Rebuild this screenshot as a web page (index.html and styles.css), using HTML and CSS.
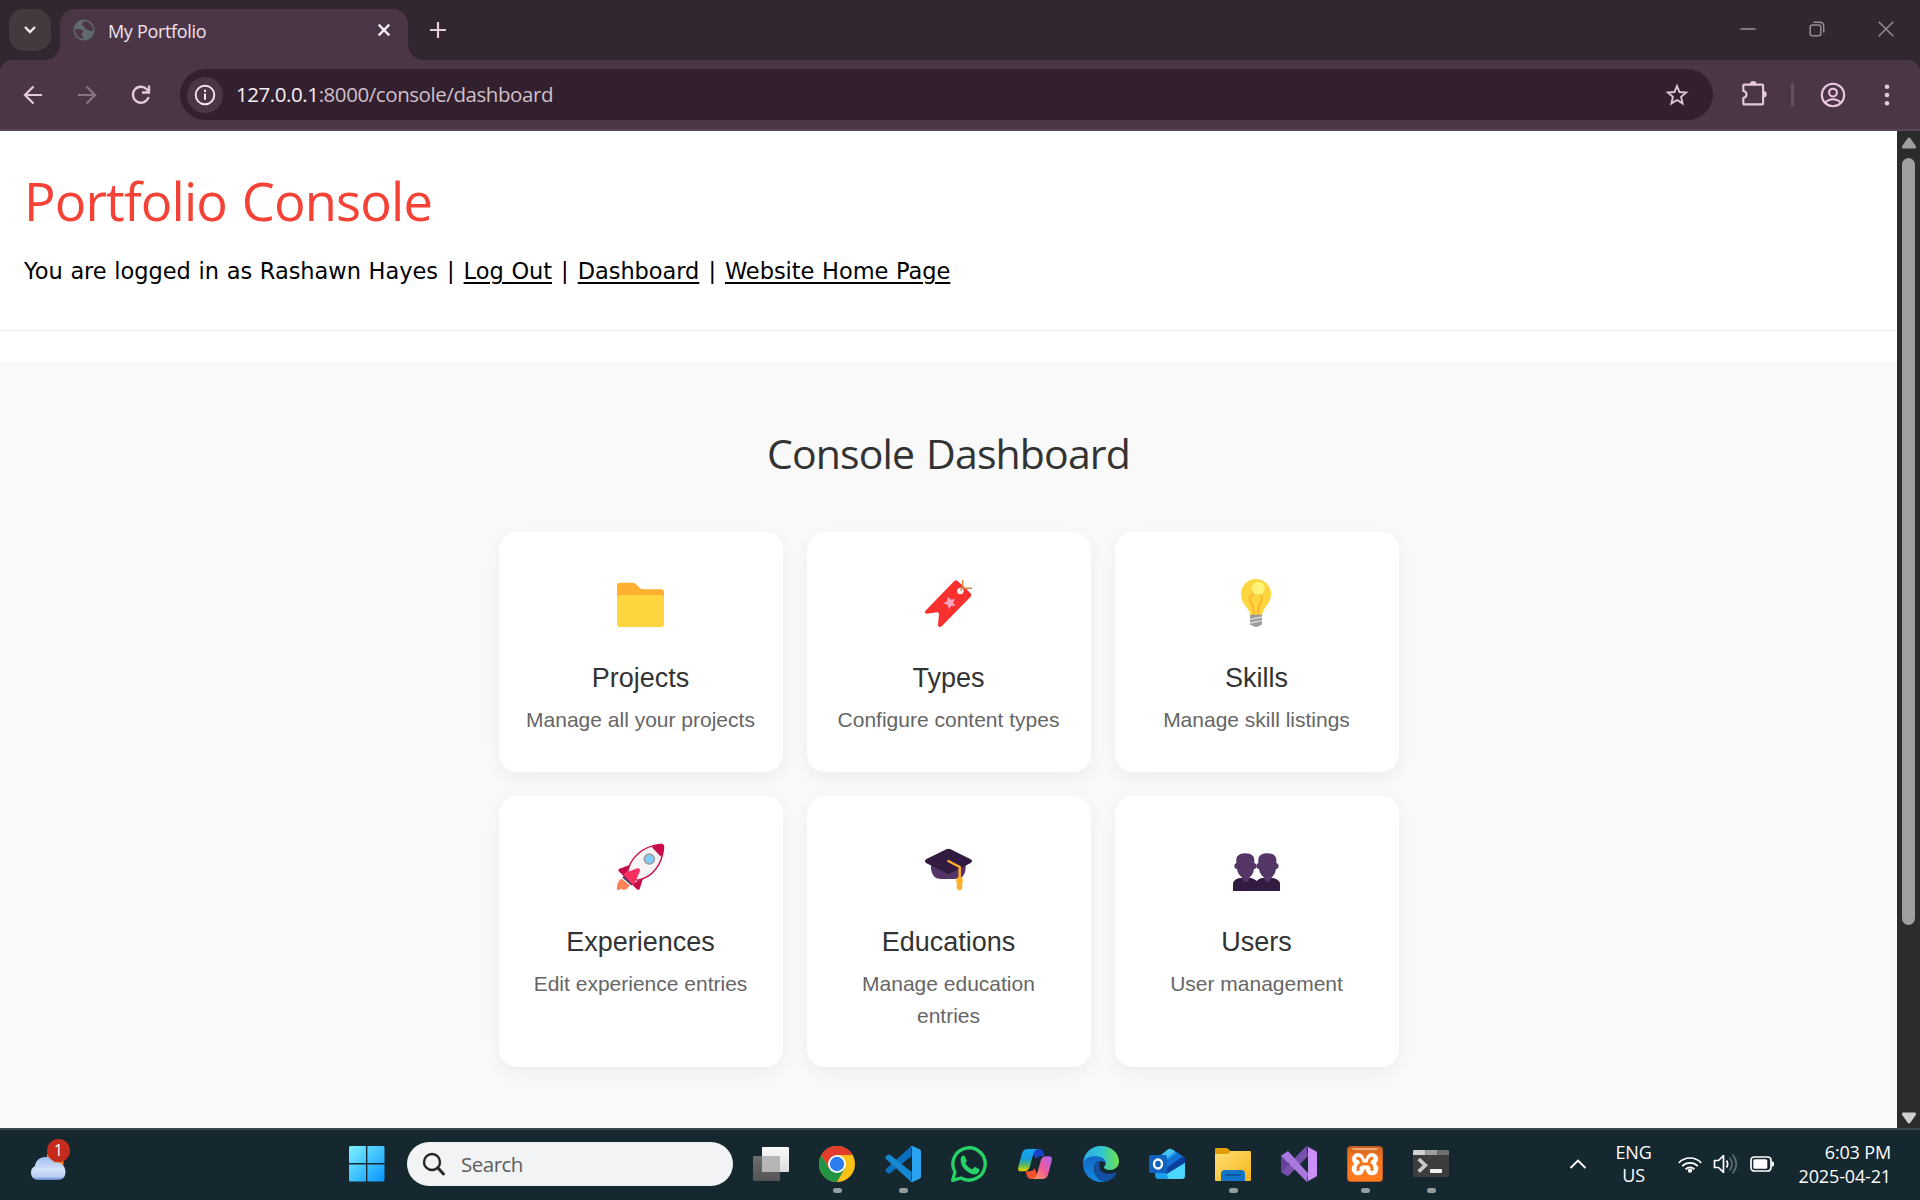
FILE: index.html
```
<!DOCTYPE html>
<html lang="en">
<head>
<meta charset="utf-8">
<title>My Portfolio</title>
<link rel="stylesheet" href="styles.css">
</head>
<body>
<div class="screen">
  <div class="tabstrip">
    <div class="tab-search"><svg width="14" height="10" viewBox="0 0 14 10"><path d="M2 2l5 5 5-5" fill="none" stroke="#f3e6ef" stroke-width="2.4"/></svg></div>
    <div class="tab">
      <svg class="favicon" width="22" height="22" viewBox="0 0 22 22"><circle cx="11" cy="11" r="10.5" fill="#5f6a6f"/><path d="M11.5 2c-1 1.500-2.500 1.500-2.500 3.500 0 2 3 1.500 3 4 0 1.500 2 1 3.500 1.500 1.500.6 2 1.500 4 1l.5-1A9 9 0 0 0 11.500 2zM2 10c3 0 5.500.2 7 1 1.500.8 1.500 2.200 0 3-1.200.7-1 2.500.5 3l1 2.800C5 19.500 2 15 2 10z" fill="#4b3647"/></svg>
      <span class="tab-title">My Portfolio</span>
      <svg class="tab-close" width="14" height="14" viewBox="0 0 14 14"><path d="M1.700 1.700l10.600 10.600M12.300 1.700L1.700 12.300" stroke="#f6eaf3" stroke-width="2.400"/></svg>
    </div>
    <svg class="new-tab" width="18" height="18" viewBox="0 0 18 18"><path d="M9 1v16M1 9h16" stroke="#e3cadc" stroke-width="2.200"/></svg>
    <div class="window-buttons">
      <svg width="16" height="16" viewBox="0 0 16 16"><path d="M.5 8h15" stroke="#968c93" stroke-width="1.600"/></svg>
      <svg width="16" height="16" viewBox="0 0 16 16" fill="none" stroke="#968c93" stroke-width="1.500"><rect x="1.200" y="4" width="10.600" height="10.800" rx="2.200"/><path d="M4.500 1.300H11a3.700 3.700 0 0 1 3.700 3.700v6.500"/></svg>
      <svg width="16" height="16" viewBox="0 0 16 16"><path d="M.7.700l14.600 14.600M15.300.700L.7 15.300" stroke="#968c93" stroke-width="1.500"/></svg>
    </div>
  </div>

  <div class="toolbar">
    <div class="nav-buttons">
      <svg width="20" height="20" viewBox="0 0 20 20" fill="none" stroke="#e3cadc" stroke-width="2.200"><path d="M19 10H2.500M10.500 1.500L2 10l8.500 8.500"/></svg>
      <svg width="20" height="20" viewBox="0 0 20 20" fill="none" stroke="#89747f" stroke-width="2.200"><path d="M1 10h16.500M9.500 1.500L18 10l-8.500 8.500"/></svg>
      <svg width="20" height="20" viewBox="0 0 20 20" fill="none" stroke="#e3cadc" stroke-width="2.300"><path d="M17.600 12A8 8 0 1 1 15.800 4.300L18 6.500"/><path d="M18 .5v7h-7"/></svg>
    </div>
    <div class="omnibox">
      <span class="site-info"><svg width="22" height="22" viewBox="0 0 22 22"><circle cx="11" cy="11" r="9.300" fill="none" stroke="#f3e6ef" stroke-width="1.900"/><path d="M11 9.600v6.200M11 5.800v2.100" stroke="#f3e6ef" stroke-width="2"/></svg></span>
      <span class="url"><b>127.0.0.1</b>:8000/console/dashboard</span>
      <svg class="star" width="24" height="24" viewBox="0 0 24 24"><path d="M12 3l2.500 6 6.600.6-5 4.300 1.500 6.500L12 17l-5.600 3.400 1.500-6.500-5-4.300 6.600-.6z" fill="none" stroke="#d8c9d4" stroke-width="1.900"/></svg>
    </div>
    <svg class="puzzle" width="26" height="26" viewBox="0 0 26 26"><path d="M3.200 4.600h18a.9.900 0 0 1 .9.900v18a.9.900 0 0 1-.9.900H3.200a.9.900 0 0 1-.9-.9V18c2.200-.6 3.200-2 3.200-3.600S4.500 11.400 2.300 10.800V5.500a.9.900 0 0 1 .9-.9z" fill="none" stroke="#e3cadc" stroke-width="2.100"/><path d="M9 4.200a3.200 3.200 0 0 1 6.400 0zM22.500 11a3.200 3.200 0 0 1 0 6.400z" fill="#e3cadc"/></svg>
    <span class="divider"></span>
    <svg class="avatar" width="26" height="26" viewBox="0 0 26 26" fill="none" stroke="#ecc8e2" stroke-width="2.100"><circle cx="13" cy="13" r="11.200"/><circle cx="13" cy="10.600" r="3.900"/><path d="M5.200 20.800c2-2.300 4.700-3.500 7.800-3.500s5.800 1.200 7.800 3.500"/></svg>
    <svg class="menu" width="6" height="24" viewBox="0 0 6 24" fill="#e3cadc"><circle cx="3" cy="3.700" r="2.300"/><circle cx="3" cy="12" r="2.300"/><circle cx="3" cy="20.300" r="2.300"/></svg>
  </div>

  <div class="viewport">
    <main class="page">
      <header class="console-header">
        <h1>Portfolio Console</h1>
        <p>You are logged in as Rashawn Hayes <i>|</i> <a href="#">Log Out</a> <i>|</i> <a href="#">Dashboard</a> <i>|</i> <a href="#">Website Home Page</a></p>
      </header>
      <section class="dashboard">
        <h2>Console Dashboard</h2>
        <div class="cards">
          <div class="card">
            <svg viewBox="0 0 144 144"><path d="M0 20Q0 11 9 11H46Q53 11 59 17L68 26Q72 31 79 31H133Q141 31 141 40V80H0z" fill="#ffb02e"/><rect y="48" width="141" height="96" rx="9" fill="#fcd53f"/></svg>
            <h3>Projects</h3><p>Manage all your projects</p>
          </div>
          <div class="card">
            <svg viewBox="0 0 144 144"><path fill-rule="evenodd" d="M88 6Q93 2 98 6L137 43Q141 48 137 53L50 142Q45 146 40 142Q38 140 39 136L42 106Q42 100 36 100L6 104Q-1 104 0 97zM106 26a10 10 0 1 0 .1 0z" fill="#f8312f"/><path d="M69 53L78 62L90 60L84 71L91 81L79 80L72 90L68 78L55 73L66 67z" fill="#f9a7c0"/><path d="M113 3V23L107 35M113 28H141" fill="none" stroke="#d3883e" stroke-width="4.500"/></svg>
            <h3>Types</h3><p>Configure content types</p>
          </div>
          <div class="card">
            <svg viewBox="0 0 144 144"><path d="M24 45a45 45 0 0 1 90 0c0 19-9 30-18 42-6 8-8 14-9 22H52c-1-8-4-15-10-22C33 75 24 64 24 45z" fill="#fcd53f"/><path d="M62 109L61 90C61 77 50 72 50 60A18 17 0 0 1 87 60C87 72 76 77 76 90L75 109" fill="none" stroke="#ffb02e" stroke-width="5"/><circle cx="76" cy="28" r="19.500" fill="#fff478"/><path d="M51 107H87V134Q87 138 82 139L75 143H64L56 139Q51 138 51 134z" fill="#9b9b9b"/><path d="M51 121L87 114M51 132L87 125" stroke="#d8d8d8" stroke-width="4"/></svg>
            <h3>Skills</h3><p>Manage skill listings</p>
          </div>
          <div class="card">
            <svg viewBox="0 0 144 144"><path d="M14 107C3 113-1 124 0 141Q8 142 11 138Q16 136 18 141Q31 141 38 127z" fill="#ff8257"/><path d="M38 66L7 77Q2 80 5 85L24 103zM78 106L68 139Q64 143 58 137L44 124z" fill="#ca0b4a"/><path d="M32 90C36 48 76 8 131 4Q140 4 140 14C136 62 108 104 60 112z" fill="#f4f4f4" stroke="#ca0b4a" stroke-width="4"/><path d="M104 12Q120 3 132 2Q143 2 141 16Q139 28 132 41z" fill="#ca0b4a"/><path d="M19 100L46 124" stroke="#533566" stroke-width="9"/><path d="M22 91L61 76Q70 75 69 84L52 122Q48 126 42 120L22 99Q18 95 22 91z" fill="#f92f60"/><circle cx="97" cy="48" r="15" fill="#83cbff" stroke="#9b9b9b" stroke-width="5"/></svg>
            <h3>Experiences</h3><p>Edit experience entries</p>
          </div>
          <div class="card">
            <svg viewBox="0 0 144 144"><path d="M18 60H122V78Q120 108 88 108H50Q21 108 18 78z" fill="#533566"/><path d="M64 19Q70 15 77 19L137 49Q145 54 137 60L78 90Q70 94 63 90L3 60Q-3 54 3 49z" fill="#321b41"/><path d="M70 54L104 72V106" fill="none" stroke="#ffb02e" stroke-width="7.500" stroke-linecap="round"/><path d="M104 102a10 10 0 0 1 8 16v15a8 8 0 0 1-17 0v-15a10 10 0 0 1 9-16z" fill="#ffb02e"/></svg>
            <h3>Educations</h3><p>Manage education entries</p>
          </div>
          <div class="card">
            <svg viewBox="0 0 144 144"><path d="M0 144V124Q0 105 30 104H46Q62 105 71 114Q78 105 94 104H110Q141 105 141 124V144z" fill="#321b41"/><g id="head"><path d="M10 56C8 40 18 31 37 31S66 40 64 56V60Q71 62 71 69Q71 77 63 78Q61 94 49 104Q46 117 38 117T28 104Q14 94 12 78Q4 77 4 69Q4 62 10 60z" fill="#533566"/></g><use href="#head" x="66"/></svg>
            <h3>Users</h3><p>User management</p>
          </div>
        </div>
      </section>
    </main>
    <div class="scrollbar">
      <svg width="16" height="12" viewBox="0 0 16 12"><path d="M6.500 1.500Q8-.3 9.500 1.500L14.800 9Q15.600 11.500 13.500 11.500H2.500Q.4 11.500 1.200 9z" fill="#9f9f9f"/></svg>
      <div class="thumb"></div>
      <svg width="16" height="12" viewBox="0 0 16 12"><path d="M6.500 10.500Q8 12.300 9.500 10.500L14.800 3Q15.600.5 13.500.5H2.500Q.4.500 1.200 3z" fill="#cfcfcf"/></svg>
    </div>
  </div>

  <div class="taskbar">
    <div class="weather">
      <svg width="38" height="36" viewBox="0 0 38 36"><defs><linearGradient id="cl" x2="0" y2="1"><stop offset="0" stop-color="#9ebdf2"/><stop offset=".55" stop-color="#d3e1fa"/><stop offset=".85" stop-color="#b9cef3"/><stop offset="1" stop-color="#5d86c9"/></linearGradient></defs><path d="M18 8H34.500V19H18z" fill="#f5820c"/><path d="M8 34a7.500 7.500 0 0 1-2-14C6.500 14.500 11 11 16 11c4.500 0 7.500 2 9 5.500C32 15.500 36.500 20 36.500 26c0 5-3 8-7.500 8z" fill="url(#cl)"/></svg>
      <span class="badge">1</span>
    </div>
    <div class="pinned">
      <svg class="start" width="36" height="36" viewBox="0 0 36 36"><defs><linearGradient id="win" x2="1" y2="1"><stop offset="0" stop-color="#7df3ff"/><stop offset="1" stop-color="#0894ff"/></linearGradient></defs><path d="M1.500 0H17v17H0V1.500Q0 0 1.500 0zM18.400 0H34Q35.500 0 35.500 1.500V17H18.400zM0 18.500H17V35.500H1.500Q0 35.500 0 34zM18.400 18.500H35.500V34Q35.500 35.500 34 35.500H18.400z" fill="url(#win)"/></svg>
      <div class="search"><svg width="24" height="24" viewBox="0 0 24 24" fill="none" stroke="#26292b" stroke-width="2.400"><circle cx="10" cy="10" r="8"/><path d="M16 16l5.500 6" stroke-width="3" stroke-linecap="round"/></svg><span>Search</span></div>
      <div class="apps">
        <div class="app"><svg viewBox="0 0 108 108"><defs><linearGradient id="tv" x2="0" y2="1"><stop offset="0" stop-color="#fafafa"/><stop offset="1" stop-color="#dcdcdc"/></linearGradient><linearGradient id="tv2" x2="0" y2="1"><stop offset="0" stop-color="#6c6c6c"/><stop offset="1" stop-color="#545454"/></linearGradient></defs><rect y="30" width="81" height="75" rx="4" fill="url(#tv2)"/><rect x="27" y="3" width="81" height="75" rx="3" fill="url(#tv)"/><path d="M27 30H78q3 0 3 3V78H30q-3 0-3-3z" fill="#b5b5b5"/></svg></div>
        <div class="app running"><svg viewBox="0 0 108 108"><circle cx="54" cy="54" r="54" fill="#fbc116"/><path d="M7.200 27A54 54 0 0 0 54 108L77.400 67.500 54 54 30.600 67.500z" fill="#229342"/><path d="M7.200 27L30.600 67.500 54 54 54 27H100.800A54 54 0 0 0 7.200 27z" fill="#e33b2e"/><circle cx="54" cy="54" r="27" fill="#fff"/><circle cx="54" cy="54" r="21.500" fill="#2d7cf0"/></svg></div>
        <div class="app running"><svg viewBox="0 0 108 108"><path d="M78 1L3 69Q-1 73 3 77L9 82Q12 84 16 81L80 30z" fill="#0b6fbd"/><path d="M78 107L3 39Q-1 35 3 31L9 26Q12 24 16 27L80 78z" fill="#1787d0"/><path d="M76 1Q80-1 84 1L104 10Q108 12 108 17V91Q108 96 104 98L84 107Q80 109 76 106Q81 106 81 99V9Q81 3 76 1z" fill="#2aa4f1"/></svg></div>
        <div class="app"><svg viewBox="0 0 108 108"><path d="M5 103L12 78A48.500 48.500 0 1 1 30 96z" fill="none" stroke="#25d366" stroke-width="10" stroke-linejoin="round"/><path d="M34 29q4-2 7 1l6 13q1 3-4 8c5 10 12 16 21 19q6-8 9-7l12 7c2 4-2 12-8 14-11 5-29-5-39-18S26 35 34 29z" fill="#25d366"/></svg></div>
        <div class="app"><svg viewBox="0 0 108 108"><defs><linearGradient id="cp1" x2="0" y2="1"><stop offset="0" stop-color="#17a6f3"/><stop offset=".45" stop-color="#169ed8"/><stop offset=".75" stop-color="#62bd52"/><stop offset="1" stop-color="#f6d000"/></linearGradient><linearGradient id="cp2" x1="1" x2="0" y2="1"><stop offset="0" stop-color="#a963f4"/><stop offset=".5" stop-color="#ef5a9c"/><stop offset="1" stop-color="#ffa455"/></linearGradient></defs><path d="M34 9H67Q76 9 79 18L83 31H70Q60 31 57 40L48 22Q44 10 34 9z" fill="#1a43c9"/><path d="M75 99H42Q33 99 30 90L26 76H39Q49 76 52 66L60 84Q65 98 75 99z" fill="#f5522f"/><path d="M34 9H62Q52 12 49 23L38 64Q34 76 20 76H13Q0 76 4 62L15 22Q19 9 34 9z" fill="url(#cp1)"/><path d="M75 99H47Q57 96 60 85L71 44Q75 31 88 31H95Q108 31 104 46L93 86Q89 99 75 99z" fill="url(#cp2)"/></svg></div>
        <div class="app"><svg viewBox="0 0 108 108"><defs><linearGradient id="e1" x2="1"><stop offset="0" stop-color="#2fa9e5"/><stop offset=".5" stop-color="#2fc5d3"/><stop offset="1" stop-color="#70e24c"/></linearGradient><linearGradient id="e2" x2="0" y2="1"><stop offset="0" stop-color="#1367c7"/><stop offset="1" stop-color="#128be0"/></linearGradient></defs><path d="M0 50C3 18 28 0 54 0c32 0 54 22 54 46 0 18-14 26-27 26-12 0-18-4-18-8 0-3 5-5 5-12 0-10-12-20-28-20C22 32 4 40 0 54z" fill="url(#e1)"/><path d="M0 54C2 38 20 30 38 31c18 0 30 10 30 21-2-4-8-7-15-7-12 0-20 10-20 23 0 20 16 36 34 39-36 6-67-18-67-53z" fill="url(#e2)"/><path d="M53 45c-14 2-22 15-18 31 4 18 18 31 32 31 16-3 27-13 32-24 1-3-1-4-4-3-22 9-45 0-46-18-.5-8 2-14 4-17z" fill="#124fa5"/></svg></div>
        <div class="app"><svg viewBox="0 0 108 108"><path d="M19 40L58 10Q63 7 68 10L103 32Q108 36 108 42V60L40 92H19z" fill="#1b9de4"/><path d="M33 30L58 10Q63 7 68 10L78 16 52 38z" fill="#47c1f4"/><path d="M40 68L95 29 108 36V55L50 88z" fill="#0b3f9c"/><path d="M40 52L84 20 101 31 50 68z" fill="#1272d6"/><path d="M40 92L108 50V90Q108 99 99 99H40z" fill="#4bd7fb"/><path d="M19 82L50 80 60 99H28Q19 99 19 90z" fill="#1e9fea"/><rect y="27" width="54" height="54" rx="5" fill="#0f62bd"/><ellipse cx="27" cy="54" rx="12" ry="13.500" fill="none" stroke="#fff" stroke-width="7"/></svg></div>
        <div class="app running"><svg viewBox="0 0 108 108"><defs><linearGradient id="fe" x2="1" y2="1"><stop offset="0" stop-color="#ffe07a"/><stop offset="1" stop-color="#f6b414"/></linearGradient></defs><path d="M0 9q0-3 3-3H33q4 0 7 3l7 6H105V30H0z" fill="#e19d05"/><path d="M0 24H34Q39 24 43 20L47 15H105q3 0 3 3v84q0 3-3 3H3q-3 0-3-3z" fill="url(#fe)"/><path d="M18 105V83Q18 72 29 72H79Q90 72 90 83V105z" fill="#1374c8"/><path d="M34 87H76" stroke="#0a4c8d" stroke-width="5" stroke-linecap="round"/></svg></div>
        <div class="app"><svg viewBox="0 0 108 108"><path d="M0 29L21 17V91L0 79z" fill="#65409b"/><path d="M0 79L76 0 81 30 21 91z" fill="#7650aa"/><path d="M0 29L21 15 81 82 78 108z" fill="#a878df"/><path d="M76 0L105 16Q108 18 108 22V86Q108 90 105 92L76 108Q81 106 81 99V9Q81 3 76 0z" fill="#cb90f8"/></svg></div>
        <div class="app running"><svg viewBox="0 0 108 108"><defs><linearGradient id="xa" x2="0" y2="1"><stop offset="0" stop-color="#c95e1b"/><stop offset=".3" stop-color="#f67620"/><stop offset="1" stop-color="#ff7b1d"/></linearGradient></defs><rect x="1.500" y="1.500" width="105" height="105" rx="9" fill="url(#xa)" stroke="#bd5e25" stroke-width="3"/><path d="M12 6H96Q91 13 82 13H26Q17 13 12 6z" fill="#efa779"/><g fill="#fff"><circle cx="33" cy="39" r="18"/><circle cx="75" cy="39" r="18"/><circle cx="33" cy="69" r="19"/><circle cx="75" cy="69" r="19"/><path d="M30 38H78V70H30z"/></g><path d="M32 37Q38 37 41 44L44 54H66Q67 38 75 37M44 54Q32 58 33 71M66 54Q76 58 75 71" fill="none" stroke="#f5741e" stroke-width="9" stroke-linecap="round"/></svg></div>
        <div class="app running"><svg viewBox="0 0 108 108"><path d="M0 27H108V88q0 5-5 5H5q-5 0-5-5z" fill="#3d3d3d"/><path d="M0 27V16q0-4 4-4H37V27z" fill="#d2d2d2"/><path d="M37 12H73V27H37z" fill="#9e9e9e"/><path d="M73 12H104q4 0 4 4V27H73z" fill="#707070"/><path d="M17 39L37 58 17 77" fill="none" stroke="#c9c9c9" stroke-width="11"/><rect x="51" y="69" width="36" height="12" rx="2" fill="#f0f0f0"/></svg></div>
      </div>
    </div>
    <div class="tray">
      <svg class="chevron" width="18" height="12" viewBox="0 0 18 12"><path d="M1.500 10L9 2.500l7.500 7.500" fill="none" stroke="#fff" stroke-width="1.900"/></svg>
      <div class="lang">ENG<br>US</div>
      <div class="status">
        <svg width="24" height="18" viewBox="0 0 24 18" fill="none" stroke="#fff" stroke-width="1.700"><path d="M.8 7.800a15.500 15.500 0 0 1 22.400 0M4.200 11.200a11 11 0 0 1 15.600 0M7.500 14.300a6.400 6.400 0 0 1 9 0"/><circle cx="12" cy="15.600" r="2.200" fill="#fff" stroke="none"/></svg>
        <svg width="26" height="22" viewBox="0 0 26 22" fill="none" stroke="#fff" stroke-width="1.700"><path d="M1.500 7.500H5.500L10.500 2.700V19.300L5.500 14.500H1.500z" stroke-linejoin="round"/><path d="M13.500 7.500q2.300 3.500 0 7"/><path d="M16.500 4.500q5 6.500 0 13M19.500 1.500q7.500 9.500 0 19" stroke="#5d6b72"/></svg>
        <svg width="25" height="18" viewBox="0 0 25 18"><rect x="1" y="2" width="20" height="14" rx="3.300" fill="none" stroke="#fff" stroke-width="1.700"/><rect x="3.300" y="4.300" width="14" height="9.400" rx="1.500" fill="#fff"/><path d="M21.500 6.500h1q1.500 0 1.500 1.500v2q0 1.500-1.500 1.500h-1z" fill="#fff"/></svg>
      </div>
      <div class="clock">6:03 PM<br>2025-04-21</div>
    </div>
  </div>
</div>
</body>
</html>
```
FILE: styles.css
```
* { box-sizing: border-box; }
body { margin: 0; overflow: hidden; }
h1, h2, h3, p { margin: 0; font-weight: 400; }
svg { display: block; flex: none; }

.screen {
  width: 1920px;
  height: 1200px;
  display: flex;
  flex-direction: column;
  font-family: "Open Sans", "Noto Sans", sans-serif;
  background: #33272f;
}

/* Browser tab strip */
.tabstrip { height: 60px; flex: none; display: flex; align-items: flex-start; padding: 9px 12px 0 9px; }
.tab-search { width: 42px; height: 42px; border-radius: 15px; background: #43393f; display: flex; align-items: center; justify-content: center; }
.tab { position: relative; margin-left: 9px; width: 348px; height: 51px; padding: 0 17px 9px 13px; border-radius: 15px 15px 0 0; background: #4b3647; display: flex; align-items: center; }
.tab::before, .tab::after { content: ""; position: absolute; bottom: 0; width: 15px; height: 15px; }
.tab::before { left: -15px; background: radial-gradient(circle at 0 0, transparent 14.5px, #4b3647 15px); }
.tab::after { right: -15px; background: radial-gradient(circle at 100% 0, transparent 14.5px, #4b3647 15px); }
.tab-title { flex: 1; margin-left: 13px; padding-top: 1px; font-size: 18px; line-height: 24px; letter-spacing: -.32px; color: #f1e2ec; }
.new-tab { margin: 12px 0 0 21px; }
.window-buttons { margin: 12px 14px 0 auto; display: flex; gap: 53px; }

/* Browser toolbar */
.toolbar { height: 71px; flex: none; padding: 9px 30px 9px 23px; border-radius: 12px 12px 0 0; border-bottom: 2px solid #5a4656; background: #4b3647; display: flex; align-items: center; }
.nav-buttons { display: flex; gap: 34px; }
.omnibox { width: 1534px; height: 51px; margin-left: 29px; padding: 0 24px 0 7px; border-radius: 26px; background: #33202e; display: flex; align-items: center; }
.site-info { width: 36px; height: 36px; border-radius: 50%; background: #4b3647; display: flex; align-items: center; justify-content: center; }
.url { flex: 1; margin: 0 0 2px 13px; font-size: 20.5px; letter-spacing: -.43px; color: #cfbfca; }
.url b { font-weight: 400; color: #f8ecf5; }
.puzzle { margin-left: 28px; margin-bottom: 3px; }
.divider { width: 3px; height: 24px; margin-left: 24px; border-radius: 2px; background: #66505f; }
.avatar { margin-left: 26px; }
.menu { margin-left: 38px; }

/* Page area */
.viewport { height: 997px; flex: none; display: flex; overflow: hidden; }
.page { flex: 1; background: #fff; color: #000; }
.console-header { height: 200px; padding: 30px 24px 0; border-bottom: 1px solid #eee; }
.console-header h1 { font-size: 52.5px; line-height: 79px; letter-spacing: -.85px; word-spacing: 2px; color: #f44336; }
.console-header p { margin-top: 14px; font: 22.5px/34px "DejaVu Sans", Verdana, sans-serif; word-spacing: .65px; letter-spacing: -.05px; }
.console-header i { font-style: normal; padding: 0 1.3px; }
.console-header a { color: #000; text-decoration: underline; text-decoration-thickness: 2px; text-underline-offset: 3px; }
.dashboard { height: 767px; margin-top: 30px; padding-top: 61px; background: #f9f9f9; }
.dashboard h2 { font-size: 41px; line-height: 63px; letter-spacing: -.85px; word-spacing: 2px; color: #333; text-align: center; }
.cards { width: 900px; margin: 47px auto 0; display: grid; grid-template-columns: repeat(3, 1fr); gap: 24px; font-family: "Liberation Sans", Arial, sans-serif; }
.card { padding: 47px 24px 35.5px; border-radius: 18px; background: #fff; box-shadow: 0 6px 18px rgba(0, 0, 0, .05); text-align: center; }
.card svg { width: 48px; height: 48px; margin: 0 auto; overflow: visible; }
.card h3 { margin-top: 31px; font-size: 27px; line-height: 40px; color: #333; }
.card p { margin-top: 6px; font-size: 21px; line-height: 32px; color: #666; }
.scrollbar { width: 23px; padding: 6px 0 4px; background: #2c2c2c; display: flex; flex-direction: column; align-items: center; }
.thumb { width: 13px; height: 767px; margin: 9px 0 auto; border-radius: 7px; background: #9f9f9f; }

/* Taskbar */
.taskbar { height: 72px; flex: none; padding-bottom: 2px; border-top: 2px solid #3b494c; background: #15272f; color: #fff; display: flex; align-items: center; }
.weather { position: relative; width: 349px; padding-left: 29px; }
.badge { position: absolute; left: 47px; top: -7px; width: 23px; height: 23px; border-radius: 50%; background: #c42b1c; font-size: 15.5px; line-height: 23px; text-align: center; }
.pinned { display: flex; align-items: center; }
.search { width: 326px; height: 44px; margin-left: 22px; padding-left: 15px; border-radius: 22px; background: #f2f3f5; display: flex; align-items: center; }
.search span { margin-left: 15px; font-size: 20.5px; letter-spacing: -.5px; color: #5c5e60; }
.apps { display: flex; gap: 30px; margin-left: 20px; }
.app { position: relative; width: 36px; height: 36px; }
.app svg { width: 36px; height: 36px; }
.app.running::after { content: ""; position: absolute; left: 14px; top: 42px; width: 9px; height: 5px; border-radius: 3px; background: #949da0; }
.tray { margin-left: auto; padding-right: 29px; display: flex; align-items: center; font-size: 18px; }
.lang { margin-left: 29px; line-height: 23px; text-align: center; letter-spacing: -.2px; }
.status { display: flex; align-items: center; gap: 11px; margin-left: 26px; }
.clock { margin-left: 24px; line-height: 24px; text-align: right; letter-spacing: -.15px; }
```
